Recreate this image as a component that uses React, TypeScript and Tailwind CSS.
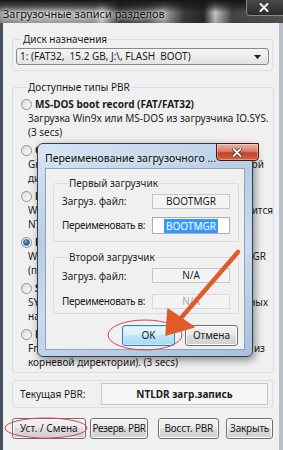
import type { ReactNode } from 'react'

function Radio({ checked = false }: { checked?: boolean }) {
  return (
    <svg width="11" height="11" viewBox="0 0 11 11" className="shrink-0">
      <defs>
        <linearGradient id={checked ? 'rg-on' : 'rg-off'} x1="0" y1="0" x2="1" y2="1">
          <stop offset="0" stopColor="#d8d8d8" />
          <stop offset="1" stopColor="#ffffff" />
        </linearGradient>
      </defs>
      <circle cx="5.5" cy="5.5" r="5" fill={`url(#${checked ? 'rg-on' : 'rg-off'})`} stroke="#8e8f8f" />
      {checked && <circle cx="5.5" cy="5.5" r="3" fill="#2a6fae" stroke="#1d4f7e" strokeWidth="0.6" />}
      {checked && <circle cx="4.7" cy="4.6" r="1" fill="#9fd0f2" />}
    </svg>
  )
}

function PbrItem({ title, lines, checked }: { title: string; lines: ReactNode[]; checked?: boolean }) {
  return (
    <div className="flex flex-col">
      <div className="flex items-center h-[14px] gap-[3px]">
        <Radio checked={checked} />
        <span className="font-bold whitespace-nowrap">{title}</span>
      </div>
      {lines.map((l, i) => (
        <div key={i} className="h-[14px] leading-[14px] pl-[7px] whitespace-nowrap">
          {l}
        </div>
      ))}
    </div>
  )
}

// line partly hidden under the dialog: start and end only show
function Split({ a, b, w }: { a: string; b: string; w: string }) {
  return (
    <div className={`flex justify-between ${w}`}>
      <span>{a}</span>
      <span>{b}</span>
    </div>
  )
}

const winBtn =
  'h-[21px] flex items-center justify-center whitespace-nowrap rounded-[3px] border border-[#707070] bg-[linear-gradient(#f2f2f2_0%,#ebebeb_45%,#dddddd_50%,#cfcfcf_100%)] text-[#1b1b1b] shadow-[inset_0_0_0_1px_#fcfcfc]'

function RenameDialog() {
  return (
    <div className="absolute left-[37px] top-[143px] w-[216px] h-[214px] rounded-[6px] border border-[#2f3e50] bg-[linear-gradient(160deg,#d6e5f4_0%,#b7cde4_35%,#c9dbef_60%,#a9c1dc_100%)] shadow-[2px_3px_8px_rgba(0,0,0,0.45)] flex flex-col px-[7px] pb-[6px]">
      <div className="h-[24px] flex items-start justify-between">
        <span className="pt-[8px] whitespace-nowrap text-[#0b0b0b] text-[10.5px] leading-[12px] [text-shadow:0_0_6px_#ffffff]">
          Переименование загрузочного ...
        </span>
        <div className="shrink-0 mt-[-1px] w-[43px] h-[18px] rounded-b-[4px] border border-[#4a1710] bg-[linear-gradient(#eab0a0_0%,#d9806b_45%,#c24429_55%,#d6603f_100%)] flex items-center justify-center shadow-[inset_0_0_0_1px_rgba(255,255,255,0.35)]">
          <svg width="10" height="9" viewBox="0 0 10 9">
            <path d="M1.5 1 L8.5 8 M8.5 1 L1.5 8" stroke="#3a1a14" strokeWidth="3.2" strokeLinecap="round" />
            <path d="M1.5 1 L8.5 8 M8.5 1 L1.5 8" stroke="#ffffff" strokeWidth="1.8" strokeLinecap="round" />
          </svg>
        </div>
      </div>
      <div className="flex-1 bg-[#f0f0f0] border border-[#8ea3ba] pt-[8px] pl-[7px] pr-[5px] flex flex-col">
        <fieldset className="border border-[#d5dfe5] rounded-[3px] pl-[8px] pb-[7px] flex flex-col gap-[8px]">
          <legend className="ml-[6px] px-[1px] leading-[12px] text-[#1e1e1e]">Первый загрузчик</legend>
          <div className="flex items-center mt-[5px]">
            <span className="w-[90px] shrink-0 whitespace-nowrap">Загруз. файл:</span>
            <div className="w-[78px] h-[15px] border border-[#c4c6c8] bg-[#f4f4f4] flex items-center justify-center">BOOTMGR</div>
          </div>
          <div className="flex items-center">
            <span className="w-[90px] shrink-0 whitespace-nowrap tracking-[-0.3px]">Переименовать в:</span>
            <div className="w-[78px] h-[17px] border border-[#abadb3] bg-white flex items-center justify-center">
              <span className="bg-[#3399ff] text-white px-[2px] leading-[14px]">BOOTMGR</span>
            </div>
          </div>
        </fieldset>
        <fieldset className="mt-[9px] border border-[#d5dfe5] rounded-[3px] pl-[8px] pb-[4px] flex flex-col gap-[10px]">
          <legend className="ml-[6px] px-[1px] leading-[12px] text-[#1e1e1e]">Второй загрузчик</legend>
          <div className="flex items-center mt-[3px]">
            <span className="w-[90px] shrink-0 whitespace-nowrap pt-[3px]">Загруз. файл:</span>
            <div className="w-[78px] h-[15px] border border-[#c4c6c8] bg-[#f4f4f4] flex items-center justify-center">N/A</div>
          </div>
          <div className="flex items-center">
            <span className="w-[90px] shrink-0 whitespace-nowrap tracking-[-0.3px]">Переименовать в:</span>
            <div className="w-[78px] h-[15px] border border-[#d9d9d9] bg-[#f4f4f4] text-[#a8a8a8] flex items-center justify-center">N/A</div>
          </div>
        </fieldset>
        <div className="mt-[11px] flex justify-end gap-[10px] pr-[1px]">
          <div className="h-[21px] w-[53px] flex items-center justify-center rounded-[3px] border border-[#3c7fb1] bg-[linear-gradient(#eaf6fd_0%,#d9f0fc_45%,#bee6fd_50%,#a7d9f5_100%)] shadow-[inset_0_0_0_1px_#c6e8fa]">
            OK
          </div>
          <div className={`${winBtn} w-[53px]`}>Отмена</div>
        </div>
      </div>
    </div>
  )
}

export default function App() {
  return (
    <div className="relative w-[283px] h-[450px] overflow-hidden bg-[#47515c] font-['Noto_Sans',sans-serif] text-[10px] text-[#1b1b1b]">
      {/* title bar */}
      <div className="relative h-[23px] bg-[linear-gradient(90deg,#a0a0a0_0%,#bdbdbd_18%,#a8a8a8_33%,#dedede_36%,#3b3b3b_42%,#666666_52%,#b0b0b0_58%,#3d3d3d_65%,#262626_72%,#cfcfcf_76%,#474747_82%,#5a5a5a_100%)]">
        <div className="absolute inset-0 bg-[linear-gradient(#161616_0%,rgba(22,22,22,0.7)_25%,rgba(30,30,30,0.05)_55%,rgba(30,30,30,0.2)_100%)]" />
        <span className="absolute left-[3px] top-[8px] leading-[12px] text-[11px] text-[#0c0c0c] [text-shadow:0_0_6px_#e8e8e8,0_0_3px_#ffffff]">
          Загрузочные записи разделов
        </span>
        <div className="absolute left-[246px] top-[-1px] w-[40px] h-[17px] rounded-b-[4px] border border-[#8a8a8a] bg-[linear-gradient(#4a4a4a,#2a2a2a)] flex items-center justify-center pr-[4px]">
          <svg width="10" height="9" viewBox="0 0 10 9">
            <path d="M1.5 1 L8.5 8 M8.5 1 L1.5 8" stroke="#f2f2f2" strokeWidth="2" strokeLinecap="round" />
          </svg>
        </div>
      </div>

      {/* client area */}
      <div className="h-[427px] ml-[3px] border-r-[4px] border-[#b9c0c7] bg-[#f0f0f0] pl-[9px] pr-[6px] flex flex-col">
        <fieldset className="mt-[10px] border border-[#d5dfe5] rounded-[3px] px-[3px] pb-[5px]">
          <legend className="ml-[6px] px-[1px] leading-[12px]">Диск назначения</legend>
          <div className="mt-[3px] h-[17px] rounded-[3px] border border-[#8a8a8a] bg-[linear-gradient(#f4f4f4_0%,#ececec_50%,#e3e3e3_100%)] flex items-center justify-between pl-[3px] pr-[7px]">
            <span className="whitespace-nowrap">1: (FAT32,&nbsp; 15.2 GB, J:\, FLASH&nbsp; BOOT)</span>
            <svg width="7" height="4" viewBox="0 0 7 4">
              <path d="M0 0 H7 L3.5 4 Z" fill="#1a1a1a" />
            </svg>
          </div>
        </fieldset>

        <fieldset className="mt-[10px] border border-[#d5dfe5] rounded-[3px] pl-[8px] pb-[3px]">
          <legend className="ml-[6px] px-[1px] leading-[12px]">Доступные типы PBR</legend>
          <div className="mt-[4px] flex flex-col gap-[4px]">
            <PbrItem
              title="MS-DOS boot record (FAT/FAT32)"
              lines={['Загрузка Win9x или MS-DOS из загрузчика IO.SYS.', '(3 secs)']}
            />
            <PbrItem
              title="GRUB4DOS 0.4.5c/0.4.6a (grldr.mbr)"
              lines={[<Split key="a" a="Grub4Dos загрузит GRLDR из" b="корневой" w="w-[236px]" />, 'директории. (3 secs)']}
            />
            <PbrItem
              title="NTLDR boot record (FAT/FAT32/NTFS)"
              lines={[<Split key="a" a="Windows NT/2000/XP: NTLDR," b="который находится" w="w-[245px]" />, 'NTLDR в корневой директории']}
            />
            <PbrItem
              checked
              title="BOOTMGR boot record (FAT/FAT32/NTFS)"
              lines={[<Split key="a" a="Windows Vista/7: загрузка" b="из BOOTMGR" w="w-[238px]" />, '(по умолчанию). (3 secs)']}
            />
            <PbrItem
              title="SYSLINUX 4.07 / 6.02"
              lines={[<Split key="a" a="SYSLINUX загрузит ldlinux.sys" b="из нужных" w="w-[240px]" />, 'на разделе папок. (3 secs)']}
            />
            <PbrItem
              title="FreeDOS boot record"
              lines={[<Split key="a" a="FreeDOS загрузка KERNEL.SYS" b="из" w="w-[237px]" />, 'корневой директории). (3 secs)']}
            />
          </div>
        </fieldset>

        <div className="mt-[7px] h-[28px] border border-[#d5dfe5] rounded-[3px] flex items-center pl-[7px] pr-[4px]">
          <span className="w-[81px] whitespace-nowrap">Текущая PBR:</span>
          <div className="flex-1 h-[22px] border border-[#c8c8c8] bg-[#f5f5f5] flex items-center justify-center font-bold">
            NTLDR загр.запись
          </div>
        </div>

        <div className="mt-[10px] flex">
          <div className={`${winBtn} w-[74px]`}>Уст. / Смена</div>
          <div className={`${winBtn} w-[59px] ml-[4px] tracking-[-0.4px]`}>Резерв. PBR</div>
          <div className={`${winBtn} w-[61px] ml-[10px] tracking-[-0.2px]`}>Восст. PBR</div>
          <div className={`${winBtn} w-[47px] ml-[7px] tracking-[-0.2px]`}>Закрыть</div>
        </div>
      </div>

      <RenameDialog />

      {/* annotations */}
      <svg className="absolute inset-0 pointer-events-none" width="283" height="450" viewBox="0 0 283 450">
        <ellipse cx="46" cy="428" rx="41" ry="10" fill="none" stroke="#cf4456" strokeWidth="1" />
        <ellipse cx="145" cy="335" rx="37" ry="15" fill="none" stroke="#cf4456" strokeWidth="1" />
        <line x1="238" y1="252" x2="181" y2="318" stroke="#e05a2b" strokeWidth="4.5" strokeLinecap="round" />
        <path d="M168 309 L194 327 L166 335 Z" fill="#e05a2b" stroke="#e05a2b" strokeWidth="1.5" strokeLinejoin="round" />
      </svg>
    </div>
  )
}
